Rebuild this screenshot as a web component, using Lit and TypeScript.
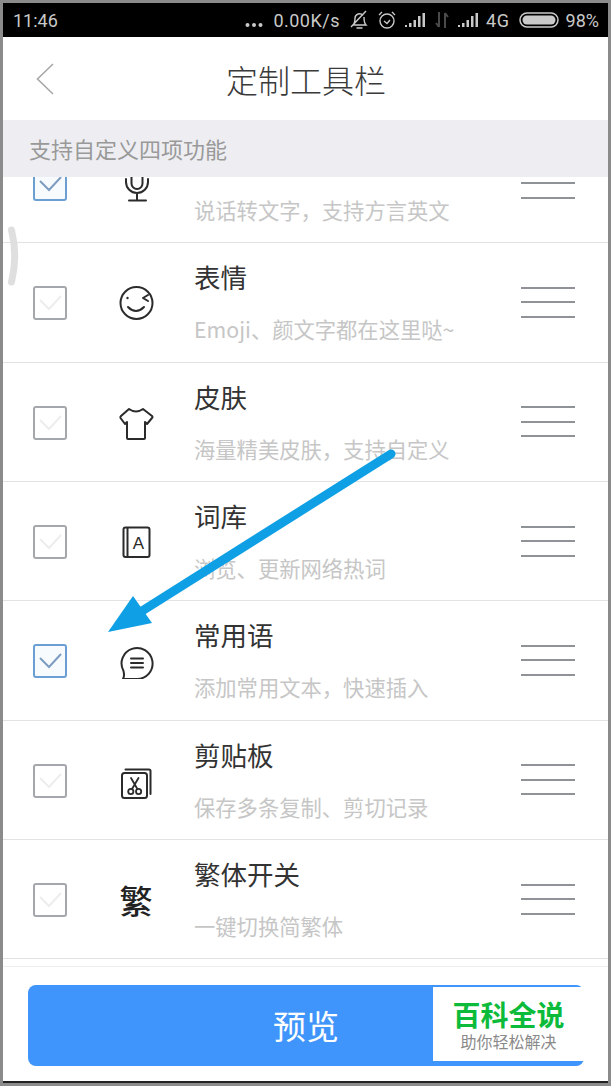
import { LitElement, html, css, svg } from "lit";
import { customElement } from "lit/decorators.js";

const ic = (c: unknown) => html`<svg class="ic" width="36" height="36" viewBox="0 0 36 36" fill="none" stroke="#2b2b2b" stroke-width="2" stroke-linecap="round" stroke-linejoin="round">${c}</svg>`;

const icons: Record<string, unknown> = {
  mic: ic(svg`<rect x="13.5" y="2" width="11" height="21" rx="5.5"/><path d="M8 13v3a11 11 0 0 0 22 0v-3M19 27v7M11 34.5h17"/>`),
  smile: ic(svg`<circle cx="18.5" cy="18" r="16"/><circle cx="9.5" cy="13" r="1.2" fill="#2b2b2b" stroke="none"/><path d="M30 10l-5 3 5 3" /><path d="M10 22q8 8 16 0"/>`),
  tee: ic(svg`<path d="M11 4Q18 9 25 4L34 11Q35 12 34 13L29 19L27 17V33Q27 34 26 34H10Q9 34 9 33V17L7 19L2.5 13Q2 12 3 11Z"/>`),
  book: html`<svg class="ic" width="36" height="36" viewBox="0 0 36 36" fill="none" stroke="#2b2b2b" stroke-width="2" stroke-linejoin="round"><rect x="5.5" y="3.5" width="26" height="29.5" rx="2"/><path d="M9.5 3.5V33"/><text x="20.5" y="25" font-family="Liberation Sans" font-size="17" text-anchor="middle" fill="#2b2b2b" stroke="none">A</text></svg>`,
  chat: ic(svg`<path d="M5 36H19A15.5 15.5 0 1 0 5.5 28C6.2 31 6.8 33 5 36Z"/><path d="M13 15.5h12M13 20h12M13 24.5h12"/>`),
  clip: ic(svg`<rect x="4" y="10" width="25" height="25" rx="2.5"/><path d="M7.5 6.5H31a1.5 1.5 0 0 1 1.5 1.5V31"/><circle cx="12.8" cy="28.5" r="2.6" stroke-width="1.8"/><circle cx="20.6" cy="28.5" r="2.6" stroke-width="1.8"/><path d="M14 26L20.5 15M19.4 26L13 15" stroke-width="1.8"/>`),
  fan: html`<span class="fan">繁</span>`,
};

const rows = [
  { t: "", s: "说话转文字，支持方言英文", i: "mic", on: true },
  { t: "表情", s: "Emoji、颜文字都在这里哒~", i: "smile" },
  { t: "皮肤", s: "海量精美皮肤，支持自定义", i: "tee" },
  { t: "词库", s: "浏览、更新网络热词", i: "book" },
  { t: "常用语", s: "添加常用文本，快速插入", i: "chat", on: true },
  { t: "剪贴板", s: "保存多条复制、剪切记录", i: "clip" },
  { t: "繁体开关", s: "一键切换简繁体", i: "fan" },
];

@customElement("app-root")
export class AppRoot extends LitElement {
  static styles = css`
    :host {
      display: block;
      position: relative;
      width: 611px;
      height: 1086px;
      box-sizing: border-box;
      padding: 3px 3px 3px 3px;
      background: #8b8b8b;
      font-family: "Noto Sans CJK SC", "Liberation Sans", sans-serif;
      overflow: hidden;
    }
    .screen {
      height: 1080px;
      display: flex;
      flex-direction: column;
      background: #fff;
      border-bottom: 2px solid #222;
      box-sizing: border-box;
    }
    .status {
      height: 34px;
      flex: none;
      background: #000;
      color: #c9c9c9;
      display: flex;
      align-items: center;
      font-family: Roboto, "Liberation Sans", sans-serif;
      font-size: 18px;
      padding: 0 9px 0 10px;
    }
    .status .time { margin-right: auto; font-size: 18px; }
    .status .dots { margin-right: 10px; }
    .status .speed { letter-spacing: 0.5px; }
    .status .four { margin-left: 7px; letter-spacing: 0.6px; }
    .status .pct { margin-left: 7px; }
    .status svg { display: block; flex: none; }
    .status .st-a { margin-left: 10px; }
    .status .st-b { margin-left: 9px; }
    .header {
      height: 83px;
      flex: none;
      display: grid;
      grid-template-columns: 1fr auto 1fr;
      align-items: center;
    }
    .back { margin-left: 33px; display: block; }
    .title { font-size: 32px; color: #3a3a3a; line-height: 40px; font-weight: 300; margin-left: 1px; }
    .band {
      height: 57px;
      flex: none;
      background: #eeeef2;
      color: #999;
      font-size: 22px;
      line-height: 57px;
      padding-left: 26px;
      position: relative;
      z-index: 1;
    }
    .list { flex: 1; overflow: hidden; min-height: 0; }
    .row {
      height: 119.33px;
      box-sizing: border-box;
      display: flex;
      align-items: center;
      border-bottom: 1px solid #e2e2e4;
    }
    .row:first-child { margin-top: -53px; }
    .check {
      flex: none;
      width: 34px;
      height: 34px;
      box-sizing: border-box;
      margin: 2px 0 0 30px;
      border: 2px solid #a4a7ab;
      border-radius: 3px;
      display: flex;
      align-items: center;
      justify-content: center;
    }
    .check.on { border-color: #6b9fd4; background: #f8fbfe; }
    .icon {
      flex: none;
      width: 36px;
      height: 36px;
      margin: 2px 0 0 51px;
      display: flex;
      align-items: center;
      justify-content: center;
    }
    .ic { display: block; flex: none; }
    .fan { font-size: 33px; line-height: 36px; color: #222; font-weight: 500; }
    .text { flex: 1; margin-left: 40px; align-self: flex-start; min-width: 0; }
    .t { font-size: 26.5px; height: 34px; line-height: 34px; color: #333; margin-top: 17px; }
    .s { font-size: 21.3px; line-height: 30px; color: #c6c6c6; margin-top: 20px; white-space: nowrap; }
    .drag {
      flex: none;
      width: 54px;
      margin: 0 33px 0 0;
      display: flex;
      flex-direction: column;
      gap: 12.5px;
    }
    .drag i { display: block; height: 2px; background: #8f9296; }
    .footer { height: 122px; flex: none; box-sizing: border-box; padding: 7px 24px 0 25px; }
    .rule { height: 1px; background: #eeeeee; margin: 0 -24px 18px -25px; }
    .btn {
      position: relative;
      height: 81px;
      background: #3f95fb;
      border-radius: 8px;
      color: #fff;
      font-size: 33px;
      text-align: center;
      line-height: 81px;
    }
    .mark {
      position: absolute;
      right: -2px;
      top: 2px;
      width: 153px;
      height: 74px;
      box-sizing: border-box;
      padding-right: 2px;
      background: #fff;
      display: flex;
      flex-direction: column;
      align-items: center;
      justify-content: center;
    }
    .mark b { font-size: 28px; line-height: 34px; color: #0dbb3b; font-weight: 700; }
    .mark em { font-style: normal; font-size: 16px; line-height: 20px; color: #8a8a8a; }
    .over { position: absolute; left: 0; top: 0; pointer-events: none; z-index: 2; }
  `;

  render() {
    const tick = (on?: boolean) => html`<svg width="26" height="20" viewBox="0 0 26 20" fill="none" stroke="${on ? "#7c9cc0" : "#ededed"}" stroke-width="2"><path d="M3 7l9 9L24 3"/></svg>`;
    const bars = html`<svg class="st-b" width="21" height="16" viewBox="0 0 21 16" fill="#c9c9c9"><rect x="0" y="13" width="2" height="2"/><rect x="4" y="11" width="2.5" height="4"/><rect x="8.5" y="8" width="2.5" height="7"/><rect x="13" y="4" width="2.5" height="11"/><rect x="17.5" y="1" width="2.5" height="14"/></svg>`;
    return html`
      <div class="screen">
        <div class="status">
          <span class="time">11:46</span>
          <svg class="dots" width="18" height="20" viewBox="0 0 18 20" fill="#c9c9c9"><circle cx="2.5" cy="15" r="2"/><circle cx="9" cy="15" r="2"/><circle cx="15.5" cy="15" r="2"/></svg>
          <span class="speed">0.00K/s</span>
          <svg class="st-a" width="18" height="20" viewBox="0 0 18 20" fill="none" stroke="#c9c9c9" stroke-width="1.4"><path d="M3 15c2-2 2-4 2-7a4.5 4.5 0 0 1 8-2.5M14 7c0 3 0 6 2 8H3M6.5 18h6M1 17L16 1"/></svg>
          <svg class="st-a" width="18" height="20" viewBox="0 0 18 20" fill="none" stroke="#c9c9c9" stroke-width="1.4"><circle cx="9" cy="11" r="7"/><path d="M6 11l3 2.5 3-3.5M1 5l3-3M17 5l-3-3"/></svg>
          ${bars}
          <svg class="st-b" width="14" height="18" viewBox="0 0 14 18" fill="none" stroke="#4a4a4a" stroke-width="2"><path d="M4 1v15M1 12l3 4M10 17V2M13 6l-3-4"/></svg>
          ${bars}
          <span class="four">4G</span>
          <svg class="st-b" width="40" height="18" viewBox="0 0 40 18"><rect x="1" y="2" width="38" height="14" rx="7" fill="none" stroke="#c9c9c9" stroke-width="1.5"/><rect x="3.5" y="4.5" width="33" height="9" rx="4.5" fill="#c9c9c9"/></svg>
          <span class="pct">98%</span>
        </div>
        <div class="header">
          <svg class="back" width="18" height="32" viewBox="0 0 18 32" fill="none" stroke="#a8a8a8" stroke-width="1.6"><path d="M17 1L1.5 16 17 31"/></svg>
          <div class="title">定制工具栏</div>
          <div></div>
        </div>
        <div class="band">支持自定义四项功能</div>
        <div class="list">
          ${rows.map((r) => html`
            <div class="row">
              <div class="check ${r.on ? "on" : ""}">${tick(r.on)}</div>
              <div class="icon">${icons[r.i]}</div>
              <div class="text"><div class="t">${r.t}</div><div class="s">${r.s}</div></div>
              <div class="drag"><i></i><i></i><i></i></div>
            </div>`)}
        </div>
        <div class="footer">
          <div class="rule"></div>
          <div class="btn"><span>预览</span>
            <div class="mark"><b>百科全说</b><em>助你轻松解决</em></div>
          </div>
        </div>
      </div>
      <svg class="over" width="611" height="1086" viewBox="0 0 611 1086" fill="none">
        <path d="M11.5 230Q18 256 11.5 282" stroke="#dfdfdf" stroke-width="7" stroke-linecap="round"/>
        <path d="M391 454L142 611" stroke="#0e9fe4" stroke-width="9" stroke-linecap="round"/>
        <path d="M133 596L152 623L108 632Z" fill="#0e9fe4"/>
      </svg>
    `;
  }
}
